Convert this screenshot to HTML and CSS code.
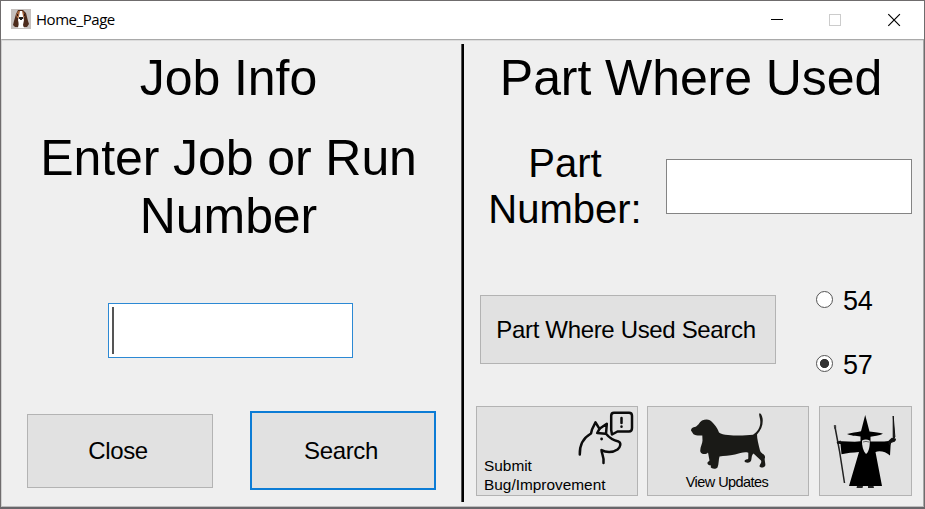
FILE: index.html
```html
<!DOCTYPE html>
<html lang="en">
<head>
<meta charset="utf-8">
<title>Home_Page</title>
<link rel="stylesheet" href="styles.css">
</head>
<body>
<div class="window">
  <header class="titlebar">
    <svg class="app-icon" viewBox="0 0 20 20">
      <rect width="20" height="20" fill="#c5c0be"/>
      <path d="M7 1h5l3 3 2 8 1 3-2 3h-4l-1-5H8l-1 5H4l-2-2 1-4 2-7z" fill="#4d2b1c"/>
      <path d="M7 2h5l2 4-1 3H6L5 6z" fill="#a4633b"/>
      <path d="M9 2h2l1 5 1 4-1 5 1 3H7l1-3-1-5 1-4z" fill="#fff"/>
      <path d="M8 8h4v2h-1v1H9v-1H8z" fill="#222"/>
      <path d="M6 5h1v2H6zM13 5h1v2h-1z" fill="#2a1712"/>
    </svg>
    <span class="caption">Home_Page</span>
    <svg class="controls" viewBox="0 0 118 14">
      <path d="M0 6.5h12" stroke="#000"/>
      <rect x="58.5" y="1.5" width="11" height="11" fill="none" stroke="#ccc"/>
      <path d="M117.3 1.2l11.6 11.6M128.9 1.2L117.3 12.8" stroke="#000" stroke-width="1.2"/>
    </svg>
  </header>
  <main class="client">
    <section class="job">
      <h1 class="heading">Job Info</h1>
      <h2 class="heading prompt">Enter Job or Run<br>Number</h2>
      <div class="field focused"><span class="caret"></span></div>
      <div class="actions">
        <button class="btn close">Close</button>
        <button class="btn default">Search</button>
      </div>
    </section>
    <div class="divider"></div>
    <section class="part">
      <h1 class="heading used">Part Where Used</h1>
      <div class="part-row">
        <div class="part-label">Part<br>Number:</div>
        <div class="field"></div>
      </div>
      <div class="search-row">
        <button class="btn wide">Part Where Used Search</button>
        <div class="radios">
          <label class="radio"><span class="dot"></span>54</label>
          <label class="radio"><span class="dot on"></span>57</label>
        </div>
      </div>
      <div class="tiles">
        <button class="btn tile bug">
          <svg class="bug-art" viewBox="576 410 60 56" fill="none" stroke="#0b0b0b" stroke-width="2.5" stroke-linecap="round" stroke-linejoin="round">
            <path d="M579.8 454.5C579.5 445 584 437.5 591 433.5L592 429.5 595.5 422.3 599.5 428.8 606.8 423.8 606 433.8C609 437.5 613.5 440.5 618.5 441.5 621.5 443 620.5 447 617.5 449.5 612.5 453 605.5 452.5 601.5 450 601.5 454 604.5 457 603.5 463"/>
            <path d="M599.5 428.8L597.2 433 605.5 433.8" />
            <path d="M614 412.8H629Q632 412.8 632 415.8V428Q632 431.5 629 431.5H617.5L612 434.5 611.2 430V415.8Q611.2 412.8 614 412.8Z"/>
            <path d="M621.5 418v5M621.5 426.5v.3"/>
            <circle cx="601.6" cy="439" r="1.4" fill="#0b0b0b" stroke="none"/>
          </svg>
          <span class="bug-text">Submit<br>Bug/Improvement</span>
        </button>
        <button class="btn tile updates">
          <svg class="dog-art" viewBox="690 412 78 58" fill="#1a1a17">
            <path d="M691 430.5Q691 427.5 694.5 427C698 426.5 699.5 422 702 420.5 706 418.8 710 419 712.5 422.5 715 425.5 717 427 719 432.5 721 434 724 434.7 728 435 737 436 746 435.5 753 434.7 758 432 760.5 427 760.3 421.5 760.2 418 758.6 415 759.3 413.7 760.2 412.3 762 415 762.6 418.5 763.3 424 761.5 430 757 434.5 757 439 758.5 444 760 450.5 761 454 765.5 454 765 457.5 764 460 765.7 463 765.3 465.5 764 468.5 759.5 467.8 759.5 466 760 463.5 762 463 761 460.5L753.5 453.5C750.5 456 752.5 460.5 750 462 748 463.5 744.5 462.5 744.5 461 745 459 747.5 460 748.3 458.5L748.3 452.8C745 451.5 740 453 735 454.5 729 456 724 455.8 719.5 456.5 718.5 459.5 719 464 717.5 467.5 716 469.3 711.5 469 710.7 467.3L711 465.5C708.5 465.5 707 464 707.5 462.5L709.5 460.5 708 452.5C706.5 454.5 701.5 455 700.3 451.5 699.8 447 702.5 444 702.5 440.5L702.3 435.5C698 435.8 695 435.3 693.5 434.2Z"/>
          </svg>
          <span class="updates-text">View Updates</span>
        </button>
        <button class="btn tile wizard">
          <svg class="wizard-art" viewBox="832 413 66 77">
            <path d="M865.2 415L869.5 431.5C875 432 880 432.8 883 433.8 879 435.7 874 436.3 870.5 436.7L870.5 441.5C877 441 884 442.5 891 440.5L890.5 447 890 455.5C886 452 880 450.3 875.5 452L882 486H849L859 452C853 452.5 847 453 841.5 454.3L840.5 444 838 443.5 838.5 441.3C845 440.7 853 442.3 860.5 441.3L860.5 436.5C856 436 850 435.5 847 434 851 433 857 432 861 431.2Z" fill="#000"/>
            <path d="M862 440.5Q865.8 438.5 869.7 440.5C870 447 868.5 452.5 866 454 863.2 451 861.8 446 862 440.5Z" fill="#e1e1e1"/>
            <path d="M863 442Q866 440.8 869 442" fill="none" stroke="#333" stroke-width=".7"/>
            <path d="M835 427L839.5 451 844.5 483" fill="none" stroke="#222" stroke-width="1.5"/>
            <path d="M834.2 425.5h1.5v3h-1z" fill="#333" stroke="#333" stroke-width=".8"/>
            <path d="M837 443l4-1.5" fill="none" stroke="#111" stroke-width="2.4"/>
            <path d="M893.2 416l1.7 21-1.7 2z" fill="#111" stroke="#111" stroke-width="1"/>
            <path d="M891.5 438.3l4 .6-.6 2.2-3.4 1.2-2 2.5-1-3.5z" fill="#111" stroke="#111" stroke-width="1"/>
            <path d="M857 486h6l-.5 2h-6zM868 486h5.5l.5 2h-6z" fill="#222"/>
          </svg>
        </button>
      </div>
    </section>
  </main>
</div>
</body>
</html>
```
FILE: styles.css
```css
* { box-sizing: border-box; }
body {
  margin: 0;
  font-family: "Liberation Sans", sans-serif;
  color: #000;
}
.window {
  width: 925px;
  height: 509px;
  overflow: hidden;
  display: flex;
  flex-direction: column;
  border: 1px solid #6f6c6d;
  border-bottom: 2px solid #68666a;
  background: #efefef;
}
.titlebar {
  height: 38px;
  flex: none;
  display: flex;
  align-items: center;
  padding-left: 10px;
  background: #fff;
}
.app-icon { width: 20px; height: 20px; margin-top: -2px; }
.caption {
  margin: -2px 0 0 5px;
  font: 15px/20px "Open Sans", sans-serif;
  letter-spacing: -0.45px;
}
.controls {
  width: 118px;
  height: 14px;
  margin-left: auto;
  margin-right: 35px;
  overflow: visible;
}
.client {
  height: 468px;
  flex: none;
  display: flex;
  border: 1px solid #a9a9a9;
  border-left-color: #d0d0d0;
  border-bottom-color: #bdbdbd;
  box-shadow: inset 0 1px #dcdcdc;
}
.job { width: 459px; padding-top: 9px; }
.heading {
  margin: 0 6px 0 0;
  font-size: 50px;
  line-height: 58px;
  letter-spacing: -0.08px;
  font-weight: 400;
  text-align: center;
}
.prompt { margin-top: 22px; }
.field {
  width: 246px;
  height: 55px;
  background: #fff;
  border: 1px solid #848484;
}
.focused {
  width: 245px;
  margin: 58px 0 0 106px;
  padding: 3px;
  border-color: #2c89d4;
}
.caret { display: block; width: 2px; height: 47px; background: #555; }
.actions {
  display: flex;
  align-items: center;
  margin: 53px 0 0 25px;
  gap: 37px;
}
.btn {
  font: 24px/28px "Liberation Sans", sans-serif;
  letter-spacing: -0.34px;
  color: #000;
  background: #e1e1e1;
  border: 1px solid #b3b3b3;
  border-radius: 0;
  padding: 0 4px 0 0;
}
.close { width: 186px; height: 74px; }
.default { width: 186px; height: 79px; border: 2px solid #0c7cd5; }
.divider { width: 3px; height: 458px; margin-top: 4px; background: #000; border-left: 1px solid #555; }
.part { width: 458px; padding-top: 9px; }
.used { margin-right: 4px; }
.part-row { display: flex; margin: 33px 0 0 14px; }
.part-label {
  width: 174px;
  font-size: 40px;
  line-height: 46px;
  text-align: center;
}
.part-row .field { margin: 19px 0 0 14px; }
.search-row { display: flex; margin: 55px 0 0 16px; height: 90px; }
.wide { width: 296px; height: 69px; margin-top: 8px; }
.radios { display: flex; flex-direction: column; gap: 34px; margin: -1px 0 0 40px; }
.radio { display: flex; align-items: center; gap: 10px; font-size: 27px; line-height: 30px; height: 30px; letter-spacing: -0.3px; }
.dot {
  width: 17px;
  height: 17px;
  margin-top: -3px;
  border: 1px solid #555;
  border-radius: 50%;
  background: #fff;
}
.on { background: radial-gradient(circle, #333 4.2px, #fff 5px); }
.tiles { display: flex; gap: 9px; margin: 29px 0 0 12px; }
.tile { width: 162px; height: 90px; display: flex; flex-direction: column; padding: 0; letter-spacing: 0; }
.bug-art { width: 60px; height: 56px; margin: 3px 0 0 99px; }
.bug-text { margin: -10px 0 0 7px; font-size: 15.4px; line-height: 19px; text-align: left; }
.dog-art { width: 78px; height: 58px; margin: 5px 0 0 42px; }
.updates-text {
  align-self: center;
  margin: 3px 2px 0 0;
  font-size: 14.5px;
  line-height: 18px;
  letter-spacing: -0.55px;
}
.wizard { width: 93px; margin-left: 1px; }
.wizard-art { width: 66px; height: 77px; margin: 6px 0 0 12px; }
```
